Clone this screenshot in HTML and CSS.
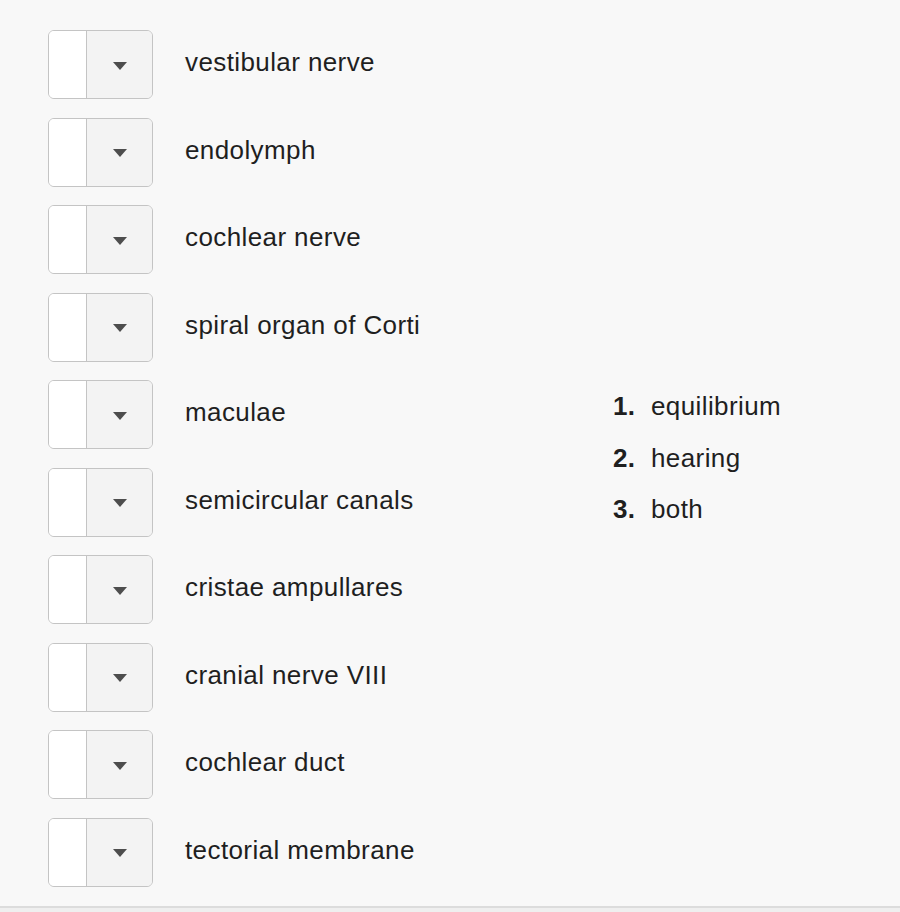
FILE: index.html
```html
<!DOCTYPE html>
<html>
<head>
<meta charset="utf-8">
<link rel="stylesheet" href="styles.css">
</head>
<body>
<div class="panel">
  <div class="items">
    <div class="row"><div class="select"><span class="field"></span><span class="btn"><span class="caret"></span></span></div><span class="label">vestibular nerve</span></div>
    <div class="row"><div class="select"><span class="field"></span><span class="btn"><span class="caret"></span></span></div><span class="label">endolymph</span></div>
    <div class="row"><div class="select"><span class="field"></span><span class="btn"><span class="caret"></span></span></div><span class="label">cochlear nerve</span></div>
    <div class="row"><div class="select"><span class="field"></span><span class="btn"><span class="caret"></span></span></div><span class="label">spiral organ of Corti</span></div>
    <div class="row"><div class="select"><span class="field"></span><span class="btn"><span class="caret"></span></span></div><span class="label">maculae</span></div>
    <div class="row"><div class="select"><span class="field"></span><span class="btn"><span class="caret"></span></span></div><span class="label">semicircular canals</span></div>
    <div class="row"><div class="select"><span class="field"></span><span class="btn"><span class="caret"></span></span></div><span class="label">cristae ampullares</span></div>
    <div class="row"><div class="select"><span class="field"></span><span class="btn"><span class="caret"></span></span></div><span class="label">cranial nerve VIII</span></div>
    <div class="row"><div class="select"><span class="field"></span><span class="btn"><span class="caret"></span></span></div><span class="label">cochlear duct</span></div>
    <div class="row"><div class="select"><span class="field"></span><span class="btn"><span class="caret"></span></span></div><span class="label">tectorial membrane</span></div>
  </div>
  <ol class="choices">
    <li><span class="num">1.</span><span>equilibrium</span></li>
    <li><span class="num">2.</span><span>hearing</span></li>
    <li><span class="num">3.</span><span>both</span></li>
  </ol>
</div>
</body>
</html>
```

FILE: styles.css
```css
html, body {
  margin: 0;
  padding: 0;
  background: #efefef;
}
body {
  font-family: "Liberation Sans", Arial, Helvetica, sans-serif;
  color: #1f1f1f;
}
.panel {
  display: flex;
  align-items: center;
  background: #f8f8f8;
  border-bottom: 2px solid #dcdcdc;
  padding: 30px 0 19px 48px;
}
.items {
  width: 565px;
  display: flex;
  flex-direction: column;
  gap: 18.56px;
}
.row {
  display: flex;
  align-items: center;
  height: 69px;
}
.select {
  box-sizing: border-box;
  width: 105px;
  height: 69px;
  display: flex;
  border: 1px solid #c4c4c4;
  border-radius: 6px;
  overflow: hidden;
  flex: none;
}
.field {
  width: 37px;
  background: #ffffff;
  border-right: 1px solid #c4c4c4;
}
.btn {
  flex: 1;
  background: #f3f3f3;
  display: flex;
  align-items: center;
  justify-content: center;
}
.caret {
  width: 0;
  height: 0;
  border-left: 7.5px solid transparent;
  border-right: 7.5px solid transparent;
  border-top: 8px solid #4d4d4d;
  margin-top: 2px;
}
.label {
  margin-left: 32px;
  font-size: 26px;
  letter-spacing: 0.4px;
  padding-bottom: 4px;
}
.choices {
  list-style: none;
  margin: 0;
  padding: 0;
  font-size: 26px;
  letter-spacing: 0.4px;
}
.choices li {
  display: flex;
  line-height: 51.5px;
}
.num {
  font-weight: bold;
  width: 38px;
}
```
